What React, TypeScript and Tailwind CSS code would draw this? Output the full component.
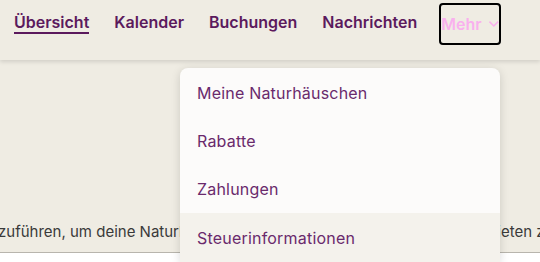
import React from 'react';

const NavItem = ({ label, active }: { label: string; active?: boolean }) => (
  <a
    href="#"
    className={
      'text-[16px] font-semibold text-[#5b1a5d] leading-[20px] border-b-2 ' +
      (active ? 'border-[#5b1a5d]' : 'border-transparent')
    }
  >
    {label}
  </a>
);

const App = () => {
  const menu = ['Meine Naturhäuschen', 'Rabatte', 'Zahlungen', 'Steuerinformationen'];
  return (
    <div
      className="relative w-[540px] h-[262px] overflow-hidden bg-[#efece3]"
      style={{ fontFamily: 'Inter, "Open Sans", sans-serif' }}
    >
      {/* Top navigation */}
      <header className="h-[60px] bg-[#efece3] shadow-[0_2px_4px_rgba(0,0,0,0.12)] flex items-start px-[14px] pt-[12px] gap-[25px]">
        <NavItem label="Übersicht" active />
        <NavItem label="Kalender" />
        <NavItem label="Buchungen" />
        <NavItem label="Nachrichten" />
        <button className="-mt-[9px] ml-[-3px] h-[42px] w-[62px] border-2 border-black rounded-[4px] flex items-center justify-center gap-[6px] text-[16px] font-semibold text-[#f9b0ee]">
          Mehr
          <svg width="12" height="12" viewBox="0 0 12 12" fill="none" stroke="currentColor" strokeWidth="1.6">
            <path d="M1.5 3.5l4.5 4.5 4.5-4.5" />
          </svg>
        </button>
      </header>

      {/* Page content behind the menu */}
      <div className="pt-[160px]">
        <p className="whitespace-nowrap text-[15px] text-[#3a3a3a] leading-[24px] -ml-[2px]">
          zuführen, um deine Naturhäuschen auf unserer schönen Plattform anbieten zu können.
        </p>
        <div className="mt-[8px] border-t border-[#b8b5ad] bg-white h-[40px]" />
      </div>

      {/* Dropdown menu */}
      <div className="absolute left-[180px] top-[68px] w-[320px] bg-[#fcfbfa] rounded-t-[8px] shadow-[0_2px_10px_rgba(0,0,0,0.15)] flex flex-col">
        {menu.map((m, i) => (
          <a
            key={m}
            href="#"
            className={
              'flex items-center px-[17px] text-[16px] tracking-[0.2px] text-[#6a2a6c] ' +
              (i === 0 ? 'h-[49px]' : i === 3 ? 'h-[49px] bg-[#f4f2ec]' : 'h-[48px]')
            }
          >
            {m}
          </a>
        ))}
      </div>
    </div>
  );
};

export default App;
